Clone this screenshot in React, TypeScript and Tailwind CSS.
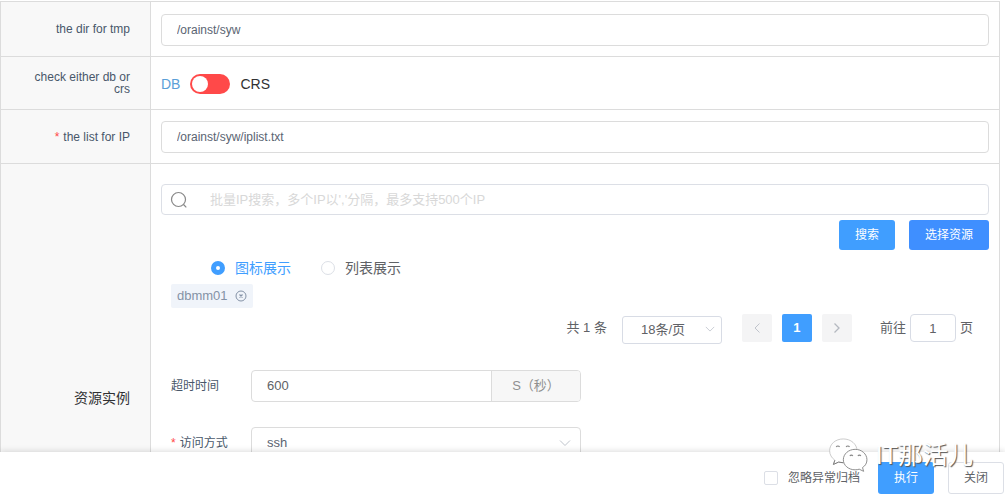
import { useState } from "react";
import type { ReactNode } from "react";

const field =
  "w-full rounded border border-[#dcdcdc] bg-white px-[15px] text-[#5a6472] outline-none focus:border-[#409eff]";

function Row({ label, required, tall, children }: { label: ReactNode; required?: boolean; tall?: boolean; children: ReactNode }) {
  return (
    <div className="grid grid-cols-[150px_minmax(0,1fr)] border-b border-[#dcdcdc]">
      <div className="flex items-center justify-end border-r border-[#dcdcdc] bg-[#f8f8f8] pr-5 pl-5 text-right text-xs leading-3 text-[#48576a]">
        <span className={tall ? "text-sm text-[#303133]" : ""}>
          {required && <span className="mr-1 text-[#ff4949]">*</span>}
          {label}
        </span>
      </div>
      <div className="px-[10px]">{children}</div>
    </div>
  );
}

function ChevronDown({ className }: { className: string }) {
  return (
    <svg className={className} viewBox="0 0 12 12" fill="none" stroke="#bfc4cc" aria-hidden="true">
      <path d="M1 3.5 6 8.5 11 3.5" />
    </svg>
  );
}

function WeChatMark() {
  return (
    <svg className="h-[34px] w-[42px]" viewBox="0 0 44 36" fill="#fff" strokeLinejoin="round" aria-hidden="true">
      <path
        d="M16 1C7.500 1 1.500 6.500 1.500 13.500c0 4 2 7.500 5.500 10L5.500 28l5.500-2.500c1.500.5 3.500.700 5 .700 8 0 14.500-5.700 14.500-12.700S24 1 16 1Z"
        stroke="#bbb"
        strokeWidth=".8"
      />
      <path d="M7 23.500 5.500 28l5.500-2.500 5 .700" fill="none" stroke="#777" />
      <path
        d="M28.500 12C21.500 12 16 17 16 23s5.500 10.700 12.500 10.700c1.500 0 3-.200 4.300-.700l4.700 2.300-1.200-4C39.500 29.300 41 26.500 41 23c0-6-5.500-11-12.500-11Z"
        stroke="#888"
        strokeWidth="1"
      />
      <g fill="none" stroke="#888" strokeWidth="1.300">
        <path d="M8.500 9.500a2 2 0 0 1 3.500 0M19 9.500a2 2 0 0 1 3.500 0M23 19a1.700 1.700 0 0 1 3 0M31.500 19a1.700 1.700 0 0 1 3 0" />
      </g>
    </svg>
  );
}

export default function App() {
  const [crs, setCrs] = useState(false);
  const [view, setView] = useState("icon");

  return (
    <div className="relative flex h-screen flex-col bg-white font-['Liberation_Sans','Noto_Sans_CJK_SC',sans-serif] text-[13px] text-[#606266]">
      <main className="min-h-0 flex-1 overflow-y-auto [scrollbar-width:none]">
        <div className="mt-px mr-[5px] border-t border-r border-l border-[#dcdcdc]">
          <Row label={<label htmlFor="tmp">the dir for tmp</label>}>
            <div className="pt-3 pb-[10px]">
              <input id="tmp" className={`${field} block h-8 text-xs`} defaultValue="/orainst/syw" />
            </div>
          </Row>

          <Row label={<span id="check">check either db or crs</span>}>
            <div className="flex h-[52px] items-center gap-[10px] pt-[2px] text-sm text-[#303133]">
              <span className="text-[#5b9fd8]">DB</span>
              <button
                type="button"
                role="switch"
                aria-checked={crs}
                aria-labelledby="check"
                onClick={() => setCrs(!crs)}
                className={`flex h-5 w-10 items-center rounded-full bg-[#ff4949] px-[2px] ${crs ? "justify-end" : "justify-start"}`}
              >
                <span className="size-4 rounded-full bg-white" />
              </button>
              <span>CRS</span>
            </div>
          </Row>

          <Row required label={<label htmlFor="iplist">the list for IP</label>}>
            <div className="pt-[11px] pb-[10px]">
              <input id="iplist" className={`${field} block h-8 text-xs`} defaultValue="/orainst/syw/iplist.txt" />
            </div>
          </Row>

          <Row tall label="资源实例">
            <div className="min-h-[468px] pt-5">
              <label className="flex h-[31px] items-center rounded border border-[#dcdfe6] pl-2">
                <svg className="size-[18px] shrink-0" viewBox="0 0 18 18" fill="none" stroke="#888" strokeWidth="1.200" aria-hidden="true">
                  <circle cx="8.500" cy="8.500" r="7" />
                  <path d="m13.500 13.500 2.800 2.800" />
                </svg>
                <input
                  aria-label="批量IP搜索"
                  className="ml-[22px] min-w-0 flex-1 bg-transparent outline-none placeholder:text-[#d8d8d8]"
                  placeholder="批量IP搜索，多个IP以','分隔，最多支持500个IP"
                />
              </label>

              <div className="mt-[5px] flex justify-end gap-[14px] text-xs text-white">
                <button type="button" className="h-[30px] w-14 rounded-[3px] bg-[#409eff]">搜索</button>
                <button type="button" className="h-[30px] w-20 rounded-[3px] bg-[#3f8fff]">选择资源</button>
              </div>

              <div className="mt-2 flex h-5 items-center gap-[30px] pl-[50px] text-sm">
                {[
                  ["icon", "图标展示"],
                  ["list", "列表展示"],
                ].map(([key, text]) => (
                  <label key={key} className={`flex items-center gap-[10px] ${view === key ? "text-[#409eff]" : ""}`}>
                    <input
                      type="radio"
                      name="view"
                      checked={view === key}
                      onChange={() => setView(key)}
                      className="size-[14px] appearance-none rounded-full border border-[#dcdfe6] bg-white checked:border-[5px] checked:border-[#409eff]"
                    />
                    {text}
                  </label>
                ))}
              </div>

              <div className="mt-[6px] ml-[10px] flex h-6 w-[82px] items-center justify-between rounded-[2px] bg-[#f0f4fa] px-[6px] text-[#8492a6]">
                dbmm01
                <button type="button" aria-label="移除 dbmm01">
                  <svg className="block size-3" viewBox="0 0 12 12" fill="none" stroke="#8492a6" aria-hidden="true">
                    <circle cx="6" cy="6" r="5" />
                    <path d="m4.500 4.500 3 3m0-3-3 3" strokeWidth="1.200" />
                  </svg>
                </button>
              </div>

              <div className="mt-[6px] flex h-7 items-center justify-end pr-4">
                <span className="mr-[15px]">共 1 条</span>
                <div className="relative mt-1 mr-5 w-[100px]">
                  <select
                    aria-label="每页条数"
                    className="block h-7 w-full appearance-none rounded-[3px] border border-[#d8dce5] bg-white pl-[18px] outline-none"
                  >
                    <option>18条/页</option>
                  </select>
                  <ChevronDown className="pointer-events-none absolute top-2 right-[7px] size-[10px]" />
                </div>
                <div className="mr-7 flex gap-[10px]">
                  <button type="button" aria-label="上一页" className="flex h-7 w-[30px] items-center justify-center rounded-[2px] bg-[#f4f4f5]">
                    <svg className="h-[10px] w-[6px]" viewBox="0 0 6 10" fill="none" stroke="#c0c4cc" aria-hidden="true">
                      <path d="M5.500.500 1 5l4.500 4.500" />
                    </svg>
                  </button>
                  <button type="button" className="h-7 w-[30px] rounded-[2px] bg-[#409eff] font-bold text-white">1</button>
                  <button type="button" aria-label="下一页" className="flex h-7 w-[30px] items-center justify-center rounded-[2px] bg-[#f4f4f5]">
                    <svg className="h-[10px] w-[6px]" viewBox="0 0 6 10" fill="none" stroke="#b4b8c0" strokeWidth="1.300" aria-hidden="true">
                      <path d="M.500.500 5 5 .500 9.500" />
                    </svg>
                  </button>
                </div>
                <label className="flex items-center gap-1">
                  前往
                  <input className="h-7 w-[46px] rounded border border-[#d8dce5] text-center outline-none" defaultValue="1" />
                  页
                </label>
              </div>

              <div className="mt-7 ml-[10px] flex items-center">
                <label htmlFor="timeout" className="w-20 shrink-0 text-xs text-[#48576a]">超时时间</label>
                <div className="flex h-8 w-[330px] overflow-hidden rounded border border-[#dcdcdc]">
                  <input id="timeout" className="min-w-0 flex-1 px-[15px] outline-none" defaultValue="600" />
                  <span className="flex w-[89px] items-center justify-center border-l border-[#dcdcdc] bg-[#f7f7f7] text-[#909090]">S（秒）</span>
                </div>
              </div>

              <div className="mt-[25px] ml-[10px] flex items-center">
                <label htmlFor="access" className="w-20 shrink-0 text-xs text-[#48576a]">
                  <span className="mr-1 text-[#ff4949]">*</span>访问方式
                </label>
                <div className="relative w-[330px]">
                  <select id="access" className={`${field} block h-8 appearance-none`}>
                    <option>ssh</option>
                  </select>
                  <ChevronDown className="pointer-events-none absolute top-[10px] right-[10px] size-3" />
                </div>
              </div>
            </div>
          </Row>
        </div>
      </main>

      <footer className="relative flex h-[47px] shrink-0 items-start justify-end bg-white pt-[10px] pr-px text-xs shadow-[0_-1px_6px_rgba(0,0,0,0.14)]">
        <label className="mr-[18px] flex h-8 items-center gap-[10px]">
          <input
            type="checkbox"
            className="size-[14px] appearance-none rounded-[2px] border border-[#dcdfe6] bg-white checked:bg-[#409eff]"
          />
          忽略异常归档
        </label>
        <button type="button" className="mr-[14px] h-8 w-14 rounded-[3px] bg-[#409eff] text-white">执行</button>
        <button type="button" className="h-8 w-14 rounded-[3px] border border-[#dcdfe6] bg-white">关闭</button>
      </footer>

      <div className="pointer-events-none absolute right-8 bottom-[26px] flex items-center gap-[6px] text-[25px] leading-9 text-white [text-shadow:1px_1px_1px_#555]">
        <WeChatMark />
        <span>IT那活儿</span>
      </div>
    </div>
  );
}
